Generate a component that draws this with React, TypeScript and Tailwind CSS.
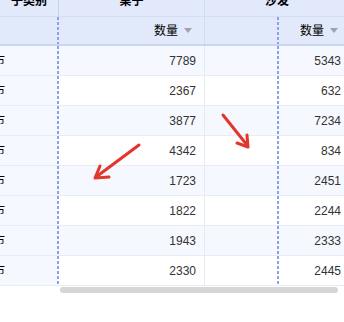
const rows = [
  { a: 7789, b: 5343 },
  { a: 2367, b: 632 },
  { a: 3877, b: 7234 },
  { a: 4342, b: 834 },
  { a: 1723, b: 2451 },
  { a: 1822, b: 2244 },
  { a: 1943, b: 2333 },
  { a: 2330, b: 2445 },
]

const Dashed = () => (
  <div className="w-[2px] shrink-0 bg-[repeating-linear-gradient(to_bottom,#8aa2e6_0_3px,transparent_3px_5px)]" />
)

const SortIcon = () => (
  <svg width="8" height="5" viewBox="0 0 8 5" className="ml-[6px]">
    <path d="M0 0h8L4 5z" fill="#9ca3b4" />
  </svg>
)

const App = () => {
  return (
    <div
      className="relative w-[344px] h-[322px] overflow-hidden bg-white text-[12px] text-[#000000]"
      style={{ fontFamily: '"Liberation Sans", "Noto Sans CJK SC", sans-serif' }}
    >
      {/* header level 1 */}
      <div className="flex h-[17px] bg-[#e2e9fa] border-b border-[#d3ddf4]">
        <div className="w-[58px] shrink-0 flex justify-center overflow-hidden">
          <span className="-mt-[5px] leading-[12px] font-bold">子类别</span>
        </div>
        <div className="w-[1px] shrink-0 bg-[#c3d1f1]" />
        <div className="w-[146px] shrink-0 flex justify-center overflow-hidden border-r border-[#d0daf3]">
          <span className="-mt-[5px] leading-[12px] font-bold">桌子</span>
        </div>
        <div className="w-[144px] shrink-0 flex justify-center overflow-hidden">
          <span className="-mt-[5px] leading-[12px] font-bold">沙发</span>
        </div>
      </div>

      {/* header level 2 */}
      <div className="flex h-[29px] bg-[#e2e9fa] border-b-2 border-[#c9d6f2]">
        <div className="w-[57px] shrink-0" />
        <Dashed />
        <div className="w-[146px] shrink-0 flex items-center justify-end pr-[12px] border-r border-[#d0daf3]">
          <span>数量</span>
          <SortIcon />
        </div>
        <div className="w-[72px] shrink-0" />
        <Dashed />
        <div className="w-[71px] shrink-0 flex items-center justify-end pr-[12px]">
          <span>数量</span>
          <SortIcon />
        </div>
      </div>

      {/* body */}
      {rows.map((r, i) => (
        <div
          key={i}
          className={`flex h-[30px] border-b border-[#e8ecf4] text-[#333333] ${
            i % 2 === 0 ? 'bg-[#f5f8fe]' : 'bg-white'
          }`}
        >
          <div className="w-[57px] shrink-0 flex items-center overflow-hidden bg-[#f5f8fe]">
            <span className="-ml-[31px] whitespace-nowrap text-[#000000]">杭州市</span>
          </div>
          <Dashed />
          <div className="w-[146px] shrink-0 flex items-center justify-end pr-[8px] border-r border-[#e6eaf2]">
            {r.a}
          </div>
          <div className="w-[72px] shrink-0" />
          <Dashed />
          <div className="w-[71px] shrink-0 flex items-center justify-end pr-[9px]">
            {r.b}
          </div>
        </div>
      ))}

      {/* horizontal scrollbar */}
      <div className="pl-[60px] pt-[1px]">
        <div className="w-[278px] h-[6px] rounded-full bg-[#d6d6d6]" />
      </div>

      {/* annotation arrows */}
      <svg
        className="absolute inset-0 pointer-events-none"
        width="344"
        height="322"
        viewBox="0 0 344 322"
      >
        <g
          stroke="#e2352b"
          strokeWidth="3"
          strokeLinecap="round"
          strokeLinejoin="round"
          fill="none"
        >
          <path d="M139 145 L96 177" />
          <path d="M100 166 L95 178 L109 177" />
          <path d="M223 115 L247 145" />
          <path d="M247 135 L248 147 L237 143" />
        </g>
      </svg>
    </div>
  )
}

export default App
